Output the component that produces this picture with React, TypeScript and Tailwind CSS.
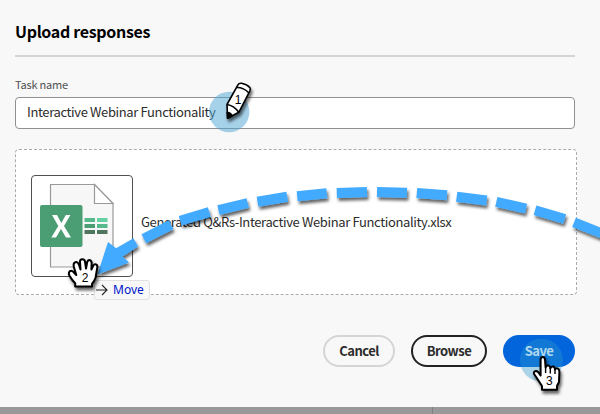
import type { ReactNode } from "react";

const font = 'font-["Noto_Sans_CJK_SC","Noto_Sans",sans-serif]';

function Pill({ children, className }: { children: ReactNode; className: string }) {
  return (
    <button className={`flex h-8 items-center justify-center rounded-full pb-[2px] text-[13px] font-bold leading-none tracking-[-0.5px] text-[#2c2c2c] ${className}`}>
      {children}
    </button>
  );
}

function ExcelFile() {
  return (
    <svg width="100" height="100" viewBox="32 176 100 100">
      <path d="M50.5 184.5H94.5L113 203.5V267H50.5Z" fill="#f7f7f7" stroke="#999" strokeWidth="1.2" />
      <path d="M94.5 184.5V203.5H113Z" fill="#fff" stroke="#999" strokeWidth="1.2" />
      <rect x="40" y="205" width="42.5" height="42" rx="2" fill="#4b9d73" />
      <path d="M84.5 218h10.5v4h-10.5z" fill="#57b98b" />
      <path d="M97 218h10.5v4H97z" fill="#65d1a2" />
      <path d="M84.5 224h10.5v4h-10.5z" fill="#4b9d73" />
      <path d="M97 224h10.5v4H97z" fill="#57b98b" />
      <path d="M84.5 230h10.5v4h-10.5z" fill="#4f755f" />
      <path d="M97 230h10.5v4H97z" fill="#4f755f" />
      <path d="M52 215H57L61.3 223L65.8 215H70.4L64 226L71 237.5H66L61 229L56 237.5H51.3L58.3 226Z" fill="#fff" />
    </svg>
  );
}

function Annotations() {
  return (
    <svg className="pointer-events-none absolute inset-0" width="600" height="414" viewBox="0 0 600 414">
      <defs>
        <filter id="shade" filterUnits="userSpaceOnUse" x="0" y="0" width="600" height="414">
          <feDropShadow dx="1.5" dy="3" stdDeviation="1.8" floodColor="#000" floodOpacity="0.6" />
        </filter>
      </defs>
      <g filter="url(#shade)">
        <path
          d="M143.8 238.7L171 224.8M180.2 220.8L209.3 212M218.5 210.2L247.7 203M257.5 201.8L287.2 196.7M297.2 196.2L326.8 193.2M336.8 193L367 192M377 192L407 192.7M416.8 193L447 195.3M456.7 196.7L486.7 200.5M496.3 201.8L526 208.7M535 210.3L564.7 219M574 222.3L605 234.7"
          fill="none" stroke="#42aaff" strokeWidth="10"
        />
        <path d="M97.5 274.5L108 242L116 248.3L133.5 238.3L138 246.5L122.5 256.5L129 262.5Z" fill="#42aaff" />
      </g>
      <circle cx="229.2" cy="112" r="20.2" fill="#4ba3d3" fillOpacity="0.5" />
      <g filter="url(#shade)" stroke="#000" strokeWidth="1.6" strokeLinejoin="round">
        <path d="M227.6 118.2L227 104.5L237.8 85.2Q238.8 83 241.5 83.3Q247 84.2 250 87.8Q250.7 89 249.8 91L238.8 112.3Z" fill="#fff" />
        <path d="M236.5 87.5Q243.5 87.2 248.7 92.8M227 104.5Q233.8 105.5 238.8 112.3" fill="none" />
        <path d="M227.6 118.2L227.3 112.5Q230.8 112.8 232.2 115.8Z" fill="#000" />
      </g>
      <text x="238" y="104" textAnchor="middle" className='font-["Liberation_Sans",sans-serif] text-[12px]' fill="#000">1</text>
      <g filter="url(#shade)" stroke="#000" strokeWidth="2" strokeLinejoin="round">
        <path d="M75.2 286.5V283.3Q72.2 280.4 69.5 275.8Q68 272.8 69.8 271.2Q72 269.8 74.5 273.2L76.3 275L73.8 266.7Q73 263.2 75.4 262.2Q77.7 261.5 79 265L80.5 269.5L80 261.8Q79.8 259.4 82.3 259.3Q84.5 259.2 85 261.5L86 268.5L87.2 262.3Q88 259.6 90 260.2Q92 261 91.6 263.5L91.4 269.5L93.2 265.8Q94.5 263.5 96.4 264.7Q97.9 265.7 97.1 268.5L95.6 277.5Q94.5 281 92 284V286.5Z" fill="#fff" />
      </g>
      <text x="85" y="282" textAnchor="middle" className='font-["Liberation_Sans",sans-serif] text-[12px]' fill="#000">2</text>
      <circle cx="541.5" cy="360.2" r="21.5" fill="#2d98cc" fillOpacity="0.38" />
      <g filter="url(#shade)" stroke="#000" strokeWidth="2" strokeLinejoin="round">
        <path d="M542 389.7V386L536.5 377.5L533.9 373.8Q533.5 370.9 536.4 371Q538.5 371.5 540.6 375.5V359.5Q540.7 357 542.7 357Q544.8 357 545 359.5L545.6 367.5Q546.3 365.2 548.7 365.6Q550.3 366.2 550.3 368.3Q551.2 366 553.5 366.5Q555 367.3 555 369.5Q556.2 367.6 558 368.6Q559.5 369.5 559.4 372L559 382L557 386V389.7Z" fill="#fff" />
        <path d="M545.6 367.5V373M550.3 368.3V373.5M555 369.5V374" fill="none" strokeWidth="1.4" />
      </g>
      <text x="549.4" y="385" textAnchor="middle" className='font-["Liberation_Sans",sans-serif] text-[12px]' fill="#000">3</text>
    </svg>
  );
}

export default function App() {
  return (
    <div className={`relative flex h-[414px] w-[600px] flex-col overflow-hidden bg-[#f8f8f8] text-[#2c2c2c] ${font}`}>
      <main className="flex h-[407px] flex-col pl-[15px]">
        <h1 className="mt-[21px] h-9 w-[560px] border-b-2 border-[#d5d5d5] text-[16px] font-bold leading-[21px] tracking-[-0.32px] text-black">
          Upload responses
        </h1>
        <label className="mt-[19px] h-5 text-[11px] leading-4 tracking-[-0.2px] text-[#505050]">Task name</label>
        <div className="mt-px flex h-8 w-[560px] items-center rounded-[4px] border border-[#909090] bg-white pb-[3px] pl-[11px] text-[13px] leading-none tracking-[-0.37px]">
          Interactive Webinar Functionality
        </div>
        <section className="mt-5 flex h-[146px] w-[562px] items-center rounded-[4px] border border-dashed border-[#aaa] bg-white pl-[15px]">
          <div className="mt-[7px] h-[102px] w-[102px] shrink-0 rounded-[4px] border border-[#505050]">
            <ExcelFile />
          </div>
          <span className="ml-2 pb-[2px] text-[13px] leading-none tracking-[-0.37px]">Generated Q&amp;Rs-Interactive Webinar Functionality.xlsx</span>
        </section>
        <div className="mt-10 flex gap-4 pl-[308px]">
          <Pill className="w-[72px] border-2 border-[#d5d5d5]">Cancel</Pill>
          <Pill className="w-[76px] border-2 border-[#222]">Browse</Pill>
          <Pill className="w-[72px] bg-[#0265dc] !text-white">Save</Pill>
        </div>
      </main>
      <footer className="flex h-[7px] bg-[#999]">
        <div className="w-[433px] border-r border-[#808080]" />
      </footer>
      <div className='absolute left-[94px] top-[280px] flex h-5 w-14 items-center rounded-[3px] border border-[#e1e1e1] bg-[#f8f8f8] font-["Noto_Sans",sans-serif] text-[12px] leading-none text-[#0017cc]'>
        <svg width="13" height="12" viewBox="0 0 13 12" fill="none" stroke="#222" strokeWidth="1.1">
          <path d="M1 6H12M7 1L12 6L7 11" />
        </svg>
        <span className="ml-[5px]">Move</span>
      </div>
      <Annotations />
    </div>
  );
}
